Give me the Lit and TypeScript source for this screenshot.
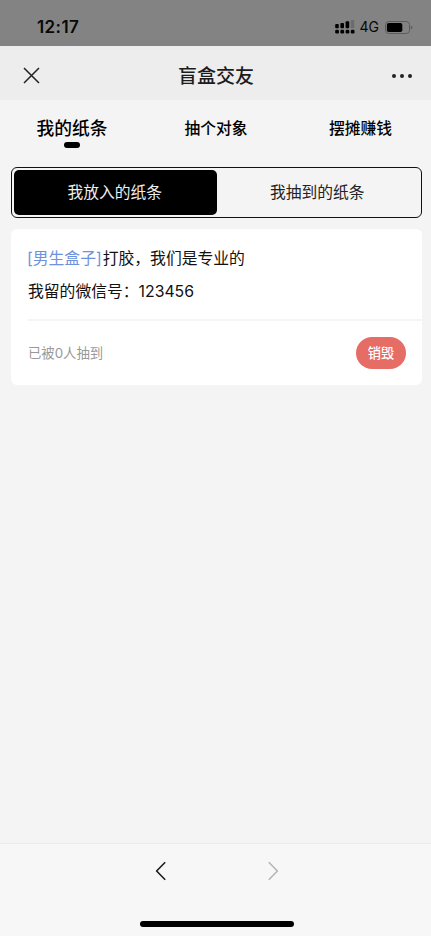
import { LitElement, html, css, svg } from "lit";
import { customElement, state } from "lit/decorators.js";
import { classMap } from "lit/directives/class-map.js";

const TABS = ["我的纸条", "抽个对象", "摆摊赚钱"];
const SEGMENTS = ["我放入的纸条", "我抽到的纸条"];

@customElement("status-bar")
class StatusBar extends LitElement {
  static styles = css`
    :host {
      display: flex;
      height: 46px;
      box-sizing: border-box;
      padding: 8px 18px 0 37px;
      align-items: center;
      justify-content: space-between;
      background: #838383;
      color: #080808;
      font-family: Inter, "Liberation Sans", sans-serif;
    }
    .time { font-size: 17px; font-weight: 600; line-height: 20px; letter-spacing: 0.4px; }
    .right { display: flex; align-items: center; }
    .net { font-size: 14px; line-height: 20px; margin: 0 6px 0 5px; }
    svg { display: block; }
  `;
  render() {
    return html`
      <span class="time">12:17</span>
      <div class="right">
        <svg width="20" height="14" viewBox="0 0 20 14">
          <rect x="0.2" y="4" width="3.6" height="4.2" rx="1" />
          <rect x="5.4" y="3" width="3.6" height="5.2" rx="1" />
          <rect x="10.6" y="1.3" width="3.6" height="6.9" rx="1" />
          <rect x="15.9" y="0" width="3.3" height="8.2" rx="1" fill="#6b6b6b" />
          ${[0.2, 5.4, 10.6, 15.8].map((x) => svg`<rect x=${x} y="9.8" width="3.7" height="3.8" rx="1.3" />`)}
        </svg>
        <span class="net">4G</span>
        <svg width="28" height="13" viewBox="0 0 28 13">
          <rect x="0.5" y="0.5" width="24" height="12" rx="3.2" fill="none" stroke="#5c5c5c" />
          <rect x="1.9" y="1.9" width="15.4" height="9.2" rx="1.8" />
          <path d="M25.8 4.6Q27.4 5.2 27.4 6.5T25.8 8.4Z" fill="#5c5c5c" />
        </svg>
      </div>
    `;
  }
}

@customElement("nav-header")
class NavHeader extends LitElement {
  static styles = css`
    :host {
      display: grid;
      grid-template-columns: 1fr auto 1fr;
      align-items: center;
      height: 54px;
      box-sizing: border-box;
      padding: 5px 19px 0 23px;
      background: #ededed;
    }
    .title { font-size: 19px; font-weight: 500; line-height: 28px; color: #1c1c1c; padding: 3px 3px 0 0; }
    .more { justify-self: end; }
    svg { display: block; }
  `;
  render() {
    return html`
      <svg width="17" height="17" viewBox="0 0 17 17">
        <path d="M1 1L16 16M16 1L1 16" fill="none" stroke="#222" stroke-width="1.5" />
      </svg>
      <span class="title">盲盒交友</span>
      <svg class="more" width="20" height="6" viewBox="0 0 20 6">
        <circle cx="2" cy="3" r="2" fill="#222" />
        <circle cx="10" cy="3" r="2" fill="#222" />
        <circle cx="18" cy="3" r="2" fill="#222" />
      </svg>
    `;
  }
}

@customElement("note-card")
class NoteCard extends LitElement {
  static styles = css`
    :host {
      display: block;
      height: 156px;
      box-sizing: border-box;
      margin: 11px 9px 0 11px;
      padding: 13px 0 0 17px;
      border-radius: 6px;
      background: #fff;
    }
    p { margin: 0; height: 33px; line-height: 33px; font-size: 15.8px; color: #111; white-space: nowrap; }
    .box { color: #6e92dc; margin: 0 1px 0 -1px; }
    .foot {
      display: flex;
      align-items: center;
      justify-content: space-between;
      height: 64px;
      margin-top: 11px;
      padding-right: 16px;
      border-top: 2px solid #f5f5f5;
    }
    .count { font-size: 13.35px; line-height: 20px; color: #999; }
    button {
      width: 50px;
      height: 32px;
      padding: 0;
      border: 0;
      border-radius: 16px;
      background: #e66c66;
      color: #fff;
      font: 500 13.2px/32px Inter, "Noto Sans CJK SC", sans-serif;
    }
  `;
  render() {
    return html`
      <p><span class="box">[男生盒子]</span>打胶，我们是专业的</p>
      <p>我留的微信号：123456</p>
      <div class="foot">
        <span class="count">已被0人抽到</span>
        <button>销毁</button>
      </div>
    `;
  }
}

@customElement("app-root")
class AppRoot extends LitElement {
  static styles = css`
    :host {
      display: flex;
      flex-direction: column;
      height: 936px;
      overflow: hidden;
      background: #f4f4f4;
      font-family: Inter, "Noto Sans CJK SC", sans-serif;
      color: #000;
    }
    .tabs { display: grid; grid-template-columns: 143px 145px 1fr; height: 67px; padding-right: -1px; }
    .tab {
      display: flex;
      flex-direction: column;
      align-items: center;
      padding: 17px 0 0 1px;
      font-size: 15.75px;
      font-weight: 500;
      line-height: 24px;
    }
    .tab.on { font-size: 17.75px; }
    .tab.on::after { content: ""; width: 16px; height: 6px; margin-top: 1px; border-radius: 3px; background: #000; }
    .tab:last-child { padding-left: 2px; }
    .segments {
      display: grid;
      grid-template-columns: 1fr 1fr;
      height: 51px;
      box-sizing: border-box;
      margin: 0 9px 0 11px;
      padding: 2px;
      border: 1px solid #111;
      border-radius: 6px;
    }
    .segment { display: flex; align-items: center; justify-content: center; padding: 0 1px 2px 0; font-size: 15.75px; border-radius: 5px; color: #222; }
    .segment.on { background: #000; color: #eee; }
    main { flex: 1; }
    .toolbar {
      display: flex;
      flex-direction: column;
      align-items: center;
      justify-content: space-between;
      height: 93px;
      box-sizing: border-box;
      padding: 17px 0 9px;
      border-top: 1px solid #ebebeb;
      background: #f7f7f7;
    }
    .arrows { display: flex; gap: 100px; margin-left: 2px; }
    .home { width: 154px; height: 6px; border-radius: 3px; background: #000; margin-left: 3px; }
    svg { display: block; }
  `;

  @state() private tab = 0;
  @state() private segment = 0;

  render() {
    return html`
      <status-bar></status-bar>
      <nav-header></nav-header>
      <main>
        <div class="tabs">
          ${TABS.map((t, i) => html`<div class=${classMap({ tab: true, on: i === this.tab })} @click=${() => (this.tab = i)}>${t}</div>`)}
        </div>
        <div class="segments">
          ${SEGMENTS.map((t, i) => html`<div class=${classMap({ segment: true, on: i === this.segment })} @click=${() => (this.segment = i)}>${t}</div>`)}
        </div>
        <note-card></note-card>
      </main>
      <div class="toolbar">
        <div class="arrows">
          <svg width="12" height="20" viewBox="0 0 12 20">
            <path d="M10.2 1.2L1.6 10L10.2 18.8" fill="none" stroke="#1c1c1c" stroke-width="1.6" stroke-linejoin="round" />
          </svg>
          <svg width="12" height="20" viewBox="0 0 12 20">
            <path d="M1.8 1.2L10.4 10L1.8 18.8" fill="none" stroke="#b5b5b5" stroke-width="1.6" stroke-linejoin="round" />
          </svg>
        </div>
        <div class="home"></div>
      </div>
    `;
  }
}
